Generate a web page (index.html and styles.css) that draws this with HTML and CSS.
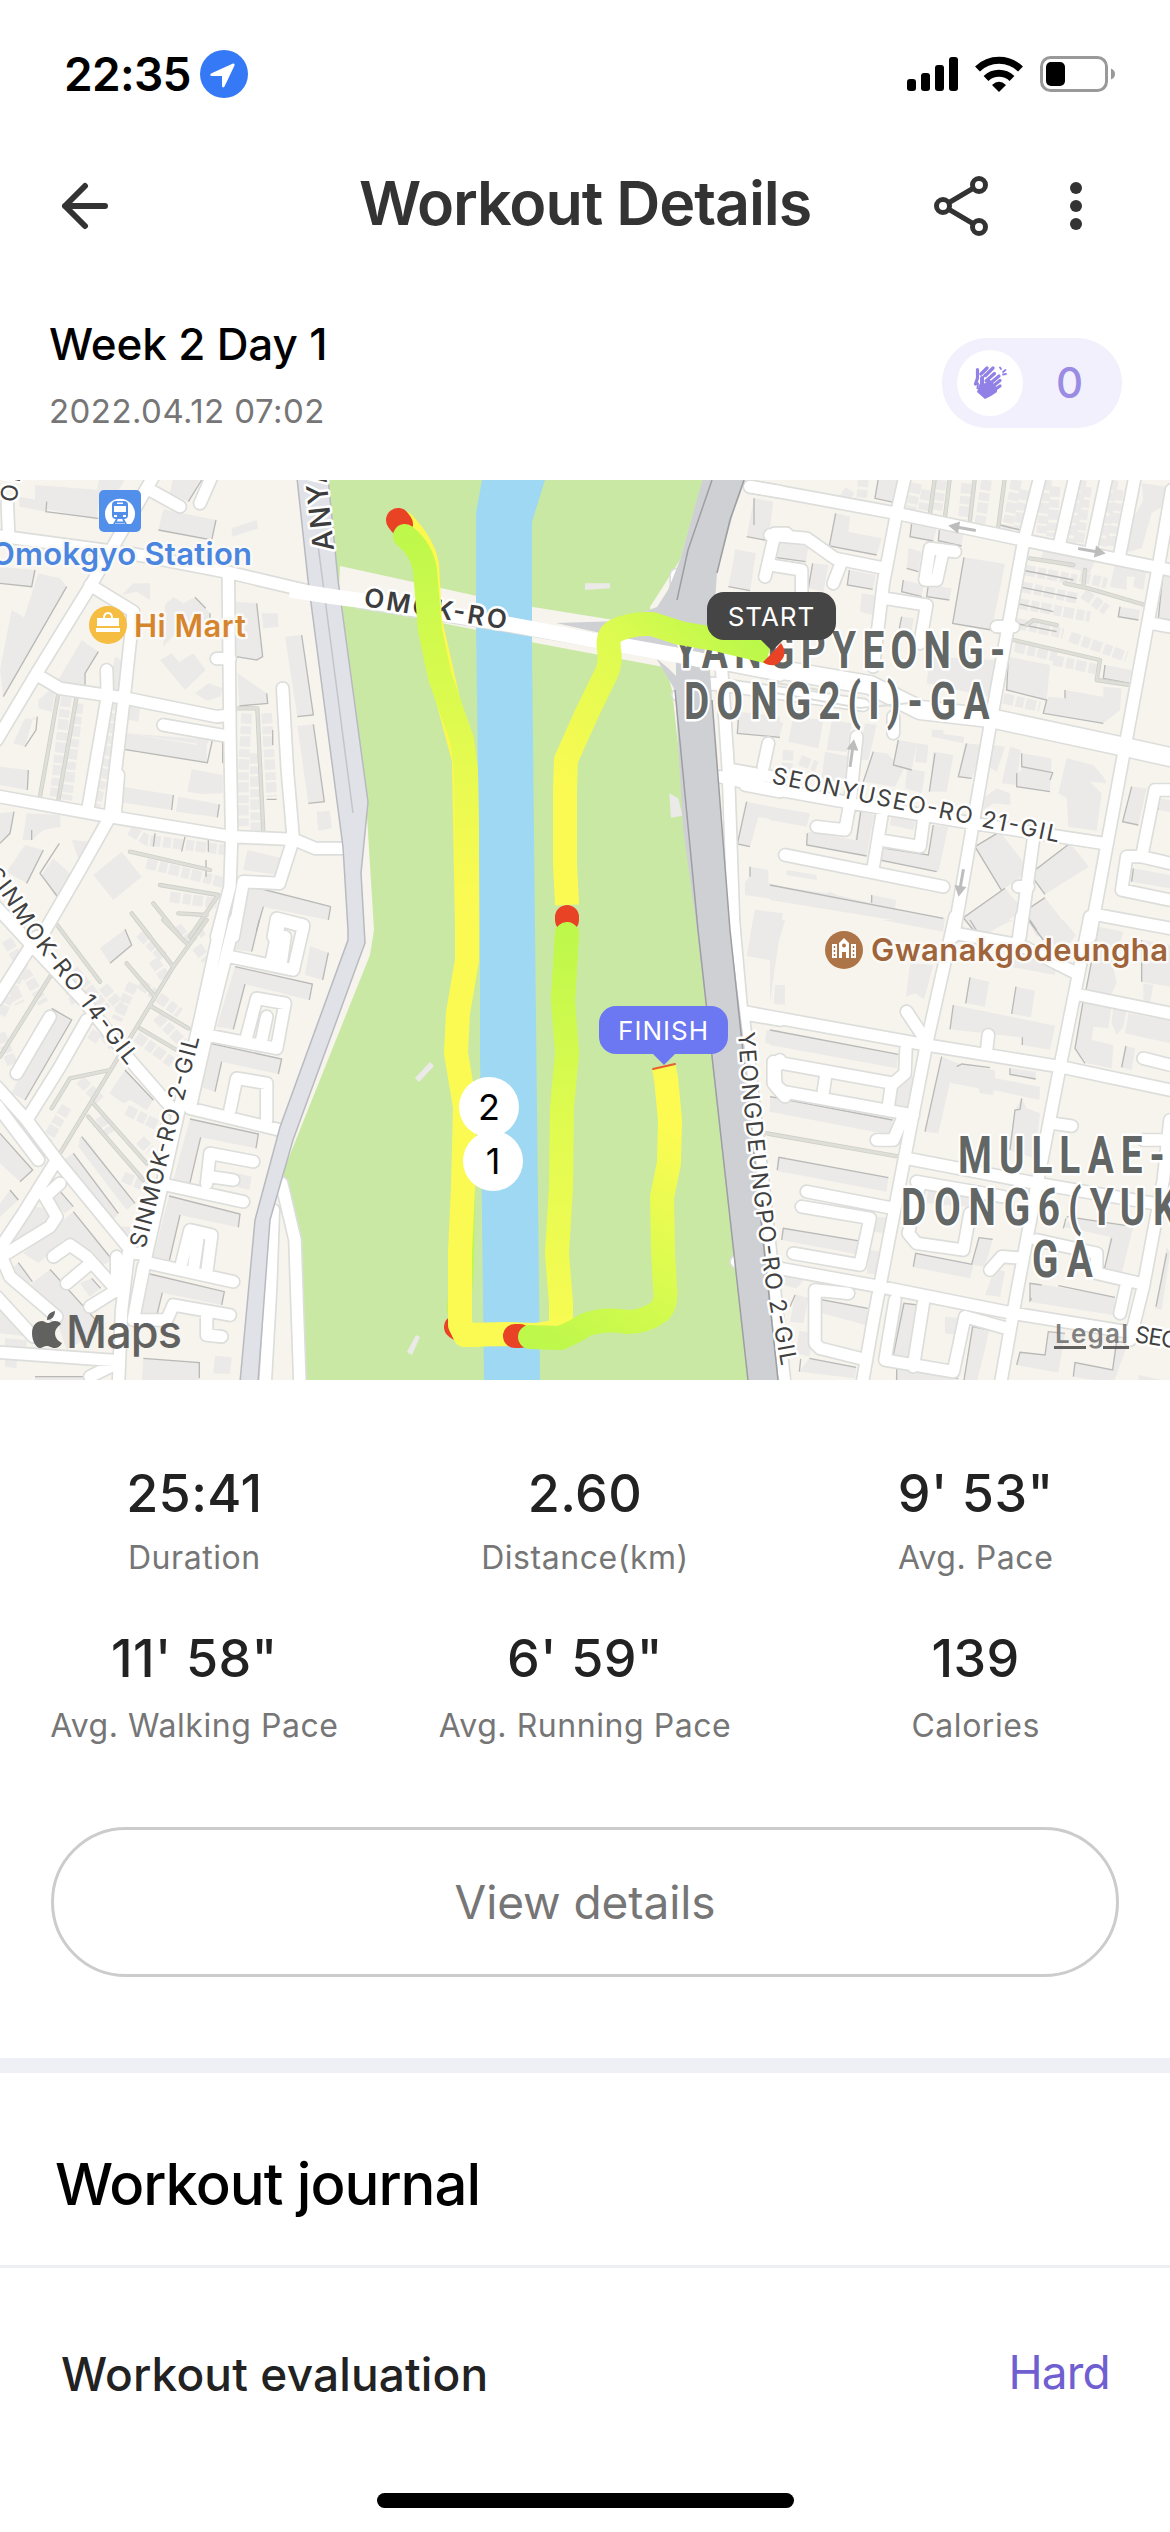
FILE: index.html
```html
<!DOCTYPE html>
<html lang="en">
<head>
<meta charset="utf-8">
<title>Workout Details</title>
<link rel="stylesheet" href="styles.css">
</head>
<body>
<div class="status-bar">
  <div class="status-left">
    <span class="clock">22:35</span>
    <svg class="location" viewBox="0 0 48 48"><circle cx="24" cy="24" r="24" fill="#3579f6"/><path d="M11 23.5 33 13.5Q35 13 34.500 15.500L24.500 36.500Q22.500 38.500 22 36V26H12Q9 25.500 11 23.500Z" fill="#fff"/></svg>
  </div>
  <div class="status-right">
    <svg class="signal" viewBox="0 0 51 34"><rect y="22" width="9" height="12" rx="3"/><rect x="14" y="16" width="9" height="18" rx="3"/><rect x="28" y="8" width="9" height="26" rx="3"/><rect x="42" width="9" height="34" rx="3"/></svg>
    <svg class="wifi" viewBox="0 0 48 36"><g fill="none" stroke="#000" stroke-width="7"><path d="M2.500 13A31 31 0 0 1 45.500 13"/><path d="M11 22.500A19 19 0 0 1 37 22.500"/></g><path d="M17 29Q24 22.500 31 29L24 36Z"/></svg>
    <svg class="battery" viewBox="0 0 75 36"><rect x="1.500" y="1.500" width="65" height="33" rx="9" fill="none" stroke="#999" stroke-width="3"/><rect x="6" y="6" width="19" height="24" rx="5"/><path d="M71 12.500Q75 14 75 18T71 23.500Z" fill="#999"/></svg>
  </div>
</div>

<header class="header">
  <svg class="back" viewBox="0 0 48 48"><path d="M24 4 4 24 24 44M4 24H44" fill="none" stroke="#333" stroke-width="6" stroke-linecap="round" stroke-linejoin="round"/></svg>
  <h1 class="title">Workout Details</h1>
  <div class="actions">
    <svg class="share" viewBox="0 0 54 60"><g fill="none" stroke="#333" stroke-width="5"><path d="M16 26 38 13M16 34 38 47"/><circle cx="9" cy="30" r="6.500"/><circle cx="45" cy="9" r="6.500"/><circle cx="45" cy="51" r="6.500"/></g></svg>
    <svg class="more" viewBox="0 0 12 48"><g fill="#333"><circle cx="6" cy="6" r="6"/><circle cx="6" cy="24" r="6"/><circle cx="6" cy="42" r="6"/></g></svg>
  </div>
</header>

<section class="summary">
  <div class="summary-text">
    <div class="plan">Week 2 Day 1</div>
    <div class="date">2022.04.12 07:02</div>
  </div>
  <div class="claps">
    <span class="clap-disc">
      <svg class="clap-icon" viewBox="0 0 34 34"><g fill="none" stroke="#9181e6" stroke-linecap="round" stroke-linejoin="round"><g stroke-width="3.200"><path d="M4.500 3.500V12L2.500 18M8 8 14 2M12.500 9.500 20 2"/><path d="M9 13 12 8.500" stroke-width="2"/><path d="M13 15 21.500 7.500M16.500 18 26 10M19 21 27 14.500M20 25 27 20"/></g><path d="M9 12V20" stroke-width="4"/><path d="M27 1.500 28 3M32.500 4 30 6M30 8.500 33 8" stroke-width="1.800"/></g><path d="M6.500 18 13 17 16 13 21 18 24 22 24 26 18 30 12 33 4 26Z" fill="#9181e6"/><path d="M5 16.500 4.500 23" stroke="#9181e6" stroke-width="2"/></svg>
    </span>
    <span class="clap-count">0</span>
  </div>
</section>

<section class="map">
<svg class="map-canvas" viewBox="0 480 1170 900">
  <defs>
    <g id="streets">
      <g transform="translate(0 470) scale(.33333)">
        <path d="M0 198 400 252 690 308 960 372M460 20 270 350 110 610 -10 810M450 60 540 110M635 20 600 100M22 100 26 200M270 345 400 425 375 660 330 1040 240 1200 130 1390M120 620 180 655 380 685 650 740 690 735M685 320 690 800 695 1100 690 1250 650 1400M650 566H690M490 765 690 800M320 600 322 680 265 1010M0 980 330 1040 695 1100 880 1108 945 1135H1060M848 655 862 900 880 1108 838 1240 730 1235 700 1400M355 915 345 1040M820 1400 830 1345 910 1365"/>
      </g>
      <g transform="translate(380 470) scale(.33333)">
        <path d="M-60 395 380 465 640 510 890 555 1200 615M890 315V440M895 675 1000 640M1110 50 1200 65M1155 320 1185 190H1220M1025 600 1045 900 1062 1400M1060 900 1200 925M1095 945 1200 965M1165 820 1150 890"/>
      </g>
      <g transform="translate(770 470) scale(.33333)">
        <path d="M-60 50 0 60 380 130 760 210 1200 300M405 20 380 130 340 340 310 590M810 20 760 220 665 740 550 1400M915 20 870 215M1010 20 965 230M1095 20 1050 250M1205 60 1165 290 1065 830 960 1400M0 195 110 205 195 265 345 295M215 275 190 340M0 285 95 300V370M345 385 470 405 450 520M680 470H730M1145 460 1200 470M555 245 480 235 465 330 500 330 520 240M-180 640 280 705M370 740V790M-150 920 0 955 250 1000 610 1060 1000 1120M260 800 240 1000 225 1080 140 1070M45 1155 520 1250M340 1010 310 1190M330 1110 450 1130 460 1055M790 1110 750 1400M745 1250H775M1200 960H1155L1115 1160 1200 1180M1115 1160H1070L1055 1260 1200 1290M985 1335 1200 1375"/>
      </g>
      <g transform="translate(0 920) scale(.33333)">
        <path d="M110 50 -10 240M665 0 600 300 530 600 440 1000 400 1200M705 0 630 300 570 565M-10 500 80 600 170 720 400 1000M-10 555 115 720M170 720 70 880 -10 1000M80 600 180 440 260 300M-30 -60 90 70 250 240 390 420 520 570M50 460 85 400 150 290M425 1000 385 1000 365 1170 355 1400M0 1297 350 1322M270 1370 350 1330M0 1000 30 1070 170 1190M-10 1130 100 1250M160 1010 210 975 260 1010 350 1110M200 1090 260 1040M180 790 135 830 170 890 150 920 20 1000M350 1010V1110L270 1160M690 110 880 150 910 20 840 0 815 120M855 50 845 120M620 345 830 385 855 250 770 235 740 350M800 290 785 360M570 565 840 630M690 570 710 475 800 490V600M500 795 730 845M620 790 630 700 760 725M630 770 700 780M450 1030 700 1085M545 1030 570 930 635 945 620 1060M593 960 580 1050M400 1200 430 1040M400 1200H500L520 1155 690 1185M620 1190V1245L665 1250M845 790 885 960 900 1400M820 870 812 1100 795 1400"/>
      </g>
      <g transform="translate(380 920) scale(.33333)">
        <path d="M1060 0 1085 280 1200 300M1090 290 1150 800 1215 1400M1200 420 1185 450 1188 500 1215 530"/>
      </g>
      <g transform="translate(770 920) scale(.33333)">
        <path d="M-80 275 0 290 470 375 870 440 1200 510M555 -10 470 370 310 1200 275 1400M960 -10 870 440 800 800 740 1120 690 1400M555 40 750 75 920 160M755 -10 745 60M410 275 460 350M655 345 650 390M930 225 1200 280M1120 415 1200 435M408 385 405 460 370 490 10 425V490L40 515 430 585M168 460 160 515M365 490 355 560M400 590 370 660H320M410 715 800 790 1150 850M110 815 370 865M95 860 300 895 270 1035 70 1000M1200 600 1180 780 1120 1100 1080 1260M1120 660H1200M850 610 905 618M-100 1025 0 1040 330 1100 730 1180 1100 1240 1200 1260M235 1120 135 1110V1270L150 1285 290 1320M375 1140 345 1320 550 1355 585 1190 710 1225M460 1150 430 1340M450 790 415 940 440 970 580 990 600 880M440 785 700 830M660 1050 695 1010 760 1015M800 960 980 1000V1060L1110 1090M1050 1180 1070 1090"/>
      </g>
    </g>
    <g id="alleys">
      <path transform="translate(0 470) scale(.33333)" d="M175 670 120 980M230 680 175 990M710 715H772L790 1085M390 1145 630 1200M480 1245 655 1275 570 1400M395 1330 450 1400M460 1300 540 1400M535 1330 620 1335"/>
      <path transform="translate(770 470) scale(.33333)" d="M495 20 480 130M540 20 525 140M615 20 600 150M705 20 685 170M780 265 910 285M885 340 955 355 1125 405M945 300 940 350M730 510 990 570 980 630 1080 645M770 465 790 450 860 465"/>
      <path transform="translate(0 920) scale(.33333)" d="M160 0 300 185M410 0 520 140M620 0 520 140 180 700M380 130 465 230M490 0 565 75M455 260 565 325M420 325 530 390M150 170 0 410M155 565 210 475 330 450M265 590 430 780M280 550 440 730"/>
      <path transform="translate(770 920) scale(.33333)" d="M-60 630 0 642 400 712"/>
    </g>
    <linearGradient id="left-run" gradientUnits="userSpaceOnUse" x1="0" y1="530" x2="0" y2="900"><stop stop-color="#bdf84a"/><stop offset=".25" stop-color="#cffa4d"/><stop offset="1" stop-color="#fbfa52"/></linearGradient>
    <linearGradient id="start-run" gradientUnits="userSpaceOnUse" x1="770" y1="650" x2="590" y2="820"><stop stop-color="#b9f849"/><stop offset=".4" stop-color="#dcfb50"/><stop offset="1" stop-color="#fbfa52"/></linearGradient>
    <linearGradient id="mid-run" gradientUnits="userSpaceOnUse" x1="0" y1="930" x2="0" y2="1320"><stop stop-color="#bdf84a"/><stop offset=".5" stop-color="#e0fb50"/><stop offset="1" stop-color="#f7fb52"/></linearGradient>
    <linearGradient id="finish-run" gradientUnits="userSpaceOnUse" x1="540" y1="1340" x2="680" y2="1130"><stop stop-color="#bdf84a"/><stop offset=".5" stop-color="#dcfb50"/><stop offset="1" stop-color="#fdfb52"/></linearGradient>
    <path id="gil14" d="M-8 870 10 893 34 931 74 982 129 1055 148 1079"/>
    <path id="gil-ydp" d="M746 1032 750 1085 759 1173 772 1273 792 1380"/>
  </defs>

  <rect class="land" y="480" width="1170" height="900"/>
  <path class="park" d="M322 480 366 800 374 930 370 955 283 1172 300 1240 304 1380H752L705 930 690 850 672 690 650 607 680 560 703 480Z"/>
  <path class="land" d="M340 566 477 596 533 607 620 621 657 607 690 590 690 672 520 640 477 630 345 604 338 610Z"/>
  <path class="water" d="M482 480 476 513 476 620 480 930 480 1053 484 1380H540L535 930 532 643 532 522 545 480Z"/>

  <g class="buildings">
    <g transform="translate(0 470) scale(.33333)">
      <path d="M105 45 300 60 290 150 105 110ZM58 80 140 95V125L58 110ZM300 20H380L350 70 290 60ZM520 20H605L565 95 510 70ZM490 118 648 150 635 210 475 180ZM695 175 770 150 775 175 697 200ZM0 290 105 300 95 350 0 340ZM115 310 180 325 200 350 10 680 0 600 60 480ZM35 420 120 470 30 610 0 600ZM245 510 295 545 255 610 250 650 175 630ZM345 560 370 575 360 660 325 655ZM365 375 400 340 450 340V390L410 365ZM495 405 520 380 550 400 585 382 630 430V470L545 470 490 530ZM480 570 515 550 537 577 580 550 617 600 555 660ZM585 670 625 640 668 655 660 680 620 692ZM708 395 770 400 788 560 770 570 708 560ZM785 430H833L836 470 790 475ZM713 610 800 670 803 700 718 708ZM855 500 905 495 940 735 892 740ZM892 768 940 763 973 995 925 1000ZM950 1025 990 1022 995 1075 955 1082ZM375 700 420 710 415 755 365 745ZM380 790 620 825 645 775 590 770 590 825 380 790 372 838 620 875 668 880V815L645 775 640 810 380 790ZM575 898 668 915V970L610 972 562 965ZM355 948 520 975 515 1020 350 995ZM535 980 658 1003 652 1042 528 1025ZM110 750 100 740 75 830 40 820 75 745ZM0 890 85 900 82 960 0 945ZM80 1030 180 1035 182 1070 130 1080 95 1110H68ZM0 1030 42 1025 30 1090 0 1120ZM75 1125 130 1140 80 1240 20 1205ZM160 1165 220 1220 180 1300 125 1215ZM280 1215 365 1145 425 1220 340 1290ZM742 1140 848 1165 832 1215 730 1200ZM750 1248 992 1310 985 1350 790 1310 770 1390H720ZM115 690 150 660 165 670 155 725 115 715ZM215 1110 270 1115 240 1180ZM620 790 668 790V880L620 875Z"/>
      <path class="houses" d="M200 680 195 710 165 980M235 700 200 990M340 690 325 850 285 1010M740 730 730 900V1070M765 850 768 1080M800 730 815 980M390 1080 440 1110 680 1140M440 1180 680 1240M510 1280 650 1300"/>
    </g>
    <g transform="translate(380 470) scale(.33333)">
      <path d="M615 340H690V355L615 360ZM868 970 895 985 907 1037 873 1043ZM1122 85 1180 95 1165 212 1100 200ZM1065 238 1128 250 1110 362 1045 350 1060 275ZM1075 725 1200 740V800L1072 790ZM1100 995 1200 1015V1050L1135 1042 1110 1130 1072 1122ZM1110 1190 1165 1200V1240L1200 1250V1290L1095 1275V1235L1110 1220ZM1125 1318 1200 1330V1400H1110Z"/>
    </g>
    <g transform="translate(770 470) scale(.33333)">
      <path d="M325 25H395L370 97 315 85ZM197 130 240 140 235 185 335 205 320 255 178 228ZM25 215 115 230 107 275 15 262ZM128 280 175 285 160 365 115 355ZM238 300 318 315 308 358 232 345ZM275 370 325 378 310 435 270 425ZM425 160 500 175 490 213 420 200ZM508 180 580 190 575 228 505 212ZM415 235 455 245 445 305 410 295ZM400 330 460 345 455 380 395 365ZM475 345 545 355 538 390 470 380ZM582 262 705 282 665 480 548 460ZM395 440 432 445 425 480 388 478ZM480 560 680 570 655 680 470 640ZM70 740 160 750 145 835 55 815ZM185 750 245 760 230 845 170 840ZM165 845 240 860 225 940 155 925ZM285 760 320 765 295 870 265 870ZM310 845 350 850 400 900 375 950 280 935ZM385 810 440 820 425 900 370 885ZM440 820 475 825 470 880 435 875ZM490 845 550 855 530 965 478 965ZM585 820 640 825 605 925 565 920ZM412 895 465 905 455 970 405 955ZM485 780 520 780 520 792 583 800 580 820 485 800ZM0 1010 120 1030 110 1070 0 1050ZM270 1025 312 1035 290 1158 110 1125 115 1085 255 1110ZM365 1030 440 1045 430 1080 360 1065ZM490 1065 535 1070 505 1205 328 1170 330 1130 475 1155ZM50 1200 140 1215V1230L50 1215ZM0 1245 170 1270 180 1265 200 1275 300 1298 305 1275 378 1290 375 1320 525 1345 520 1375 0 1290ZM0 1325 38 1330 30 1400H0ZM715 560 840 585 830 690 710 660ZM885 660 1000 680 1000 650 1055 655 1050 720 1000 760 820 730 835 680 885 685ZM670 825 705 830 680 905 655 890ZM755 850 845 865 840 965 740 950V910L755 900ZM720 830 752 840 740 945 695 940ZM890 865 970 885 1000 920 1010 940 960 935 995 970 980 1082 895 1070 890 985 865 970ZM645 980 680 955 720 970 722 1005 670 1000 640 1020ZM615 1130 690 1085 778 1200 695 1262ZM780 1212 900 1120 957 1190 825 1273ZM580 1343 705 1255 760 1320 640 1400ZM762 1325 825 1283 900 1380 800 1400ZM1085 950 1130 955 1105 1065 1058 1055ZM1165 985 1200 990V1025L1165 1020ZM1090 1195 1200 1215V1255L1085 1235ZM1115 40 1190 50 1175 110 1145 130 1115 235 1060 250 1070 180 1120 90ZM1035 280 1130 295 1120 360 1090 350 1095 320 1070 320V360L1020 350ZM1050 410 1110 420 1105 450 1045 440ZM1180 300H1200V450L1165 445ZM0 740 40 760 25 805 0 800ZM1005 585 1085 600 1075 640 1000 625ZM825 235 980 255 960 310 810 270Z"/>
      <path class="houses" d="M440 40 420 130M470 60 460 120M515 30 500 120M650 30 630 160M590 40 580 150M740 30 710 180M765 60 745 180M830 30 815 190M855 50 845 200M935 30 900 220M950 50 925 220M1030 30 995 230M1045 60 1020 230M240 60 220 90M280 20 275 90M765 300 920 330M755 350 920 385M745 400 960 440M740 460 880 490M735 530 860 560M900 500 1070 560M850 570 990 600M940 370 1010 420M700 685 810 710M55 840 50 910M90 870 140 890M930 320 1010 340"/>
    </g>
    <g transform="translate(0 920) scale(.33333)">
      <path d="M712 0H780L755 95 705 90ZM930 78 985 98 968 180 915 165ZM705 140 937 192 928 240 735 192 700 328 650 320ZM630 368 845 415 835 462 665 425 645 515 600 500ZM570 597 775 642 768 685 602 652 570 788 520 780ZM507 828 720 882 715 922 540 885 508 1022 460 1010ZM450 1062 673 1115 665 1155 487 1118 467 1200 415 1190ZM645 1307 695 1312 690 1362 640 1360ZM430 1315 598 1328 595 1390H425ZM300 85 375 28 395 75 330 130ZM155 265 215 300 75 540 35 520ZM328 520 375 450 460 540 440 570 390 540 370 550ZM0 640 98 750 60 785 0 730ZM0 850 30 810 55 840 0 890ZM35 940 100 860 150 865 160 890 60 975ZM175 808 220 860 195 880 140 830ZM220 875 337 1020 280 1050 190 960 115 1030 70 1000ZM55 1028 95 1085 65 1115 20 1060ZM150 1048 310 1225 200 1290 170 1200 70 1110ZM275 1075 302 1105 270 1130 240 1090ZM0 1170 30 1165 90 1250 0 1240ZM15 1255 80 1260V1290L15 1285ZM190 720 220 700 355 880 330 910 200 760ZM240 650 260 660 405 850 380 870 235 680ZM715 760 755 770 748 810 710 800ZM15 1320H50V1345L15 1340ZM105 1370H255V1390H105ZM360 920 390 920V980Z"/>
      <path class="houses" d="M20 60 130 250M70 130 0 290M170 130 230 250M220 150 320 270M310 200 360 260M420 40 490 110M530 20 560 60M420 190 540 280M460 120 500 180M590 80 620 120M470 290 550 370M410 350 520 430M240 480 300 540M200 560 140 660M380 570 480 620M310 340 340 380M400 190 350 300M560 60 610 30M100 10 60 0M370 770 440 800M300 590 330 640M420 660 450 690M0 340 40 440M40 210 60 250M270 340 300 360"/>
    </g>
    <path d="M415 1078 430 1062 434 1066 419 1082ZM407 1352 416 1335 420 1337 412 1355Z"/>
    <g transform="translate(380 920) scale(.33333)"><path d="M1120 0H1215L1180 122 1100 108ZM1190 195H1215V255L1183 250ZM1160 330H1200V375L1155 370ZM1175 530H1210V580L1168 575ZM1195 710H1215V760L1188 750Z"/></g>
    <g transform="translate(770 920) scale(.33333)">
      <path d="M0 0H35L0 250ZM15 195 38 198 28 255 12 250ZM335 0H520V35ZM420 130 490 135 462 238 435 220 408 230ZM600 172 657 185 645 260 587 250ZM738 200 795 212 783 292 725 282ZM550 255 855 317 840 390 757 375 755 352 540 328ZM0 330 385 403 380 445 0 375ZM0 530 368 600 362 645 0 575ZM22 712 355 773 350 815 20 752ZM38 925 280 965 272 1005 35 960ZM515 410 575 435 675 450V475L810 500 808 540 670 510V525L630 520 625 505 540 488 505 640 465 635ZM725 445 797 455V480L720 465ZM755 535 770 565 810 580 795 715 715 690 735 570ZM435 470 425 560 375 555 380 500 410 465ZM985 20 1060 35 1030 140 1040 190 1020 230 948 210ZM1115 60 1200 75V200L1115 185ZM1120 190 1150 195 1140 250 1120 245ZM940 240 1025 260 1015 325 970 320 965 360 1030 375 1025 445 950 430 915 385ZM1030 260 1070 270 1060 320 1040 345 1025 310ZM1075 280 1200 300V370L1065 340ZM1065 378 1095 385 1085 450 1052 442ZM435 1000 605 1030 625 950 668 958 645 1040 610 1035 600 1075 430 1042ZM475 795 650 810 640 865 470 850ZM320 890 358 895 345 940 310 935ZM300 990 335 995 328 1065 290 1060ZM675 1045 705 1055 690 1130 645 1125ZM785 1088 1035 1130 1030 1185 778 1145ZM910 890 1090 920 1050 1080 1000 1070 1020 950 880 920ZM1200 1000 1175 1170 1155 1165 1190 980ZM145 1135 293 1163 287 1215 140 1175ZM118 1315 260 1340 255 1375 88 1355ZM88 1232 130 1240 118 1310 78 1300ZM75 1122 115 1135 100 1210 60 1205ZM30 1060 105 1075 80 1105 40 1095ZM395 1150 450 1160 412 1320 365 1310ZM525 1190 570 1195 560 1245 525 1240ZM605 1220 657 1235 620 1390H580ZM838 1235 885 1240 865 1358 740 1335 750 1295 825 1305ZM1035 1270 1070 1280 1030 1390 910 1370 915 1328 1025 1350ZM380 1343 565 1375V1390H375ZM1105 1365 1200 1385V1400H1105ZM730 100 860 130 855 165 720 140ZM585 0H730L620 50ZM775 0H880L918 45 885 90 820 60Z"/>
    </g>
  </g>

  <g class="edges">
    <path transform="translate(0 470) scale(.33333)" d="M200 350 10 680M565 95 605 30M140 95 138 125 295 145M648 150 635 210 475 180M105 300 95 350 0 340M295 545 255 610V650M370 575 360 650M630 430V455M585 382 617 415M770 400 788 560 770 570 708 560M800 670 803 700 718 708M905 495 940 735 892 740M940 763 973 995 925 1000M645 775 622 878 372 838M520 975 515 1020M658 1003 652 1042M112 740 108 780 75 830M85 900 82 960M42 1025 30 1090 0 1120M130 1140 80 1240M178 1120 120 1210 180 1290M95 1080V1110M992 1310 985 1350M790 1310 770 1380M750 1248 992 1310M668 815V880M818 780V825M800 988H830M465 1090 460 1130M555 1100 545 1145M625 1110V1145M618 1170V1220M220 1220 170 1300M848 1165 832 1215"/>
    <path transform="translate(770 470) scale(.33333)" d="M325 25 315 85 370 97M197 130 178 228 320 255M15 262 107 275M128 280 115 355M238 300 232 345 308 358M425 160 420 200 490 213M508 180 505 212 575 228M582 262 548 460 665 480M400 330 395 365 455 380M410 295 445 305M475 345 470 380 538 390M395 440 388 475M715 560 710 660 830 690 820 730 1000 760M885 660V685M755 850V890L848 908 840 930M740 910V950L840 965M590 820 565 920 605 925M495 850 478 965M310 845 280 935M385 810 370 885 425 900M615 1130 695 1262M690 1085 615 1130M900 1120 780 1212 825 1273M705 1255 580 1343 610 1380M825 1283 762 1325 800 1380M272 1025 260 1110M112 1090 110 1125 290 1158M490 1065 475 1155 332 1133 328 1170 500 1205M1085 950 1058 1055 1105 1065M1090 1195 1085 1235M1165 985V1020M0 1245 520 1345M305 1275V1298M1050 410 1045 440 1105 450M1180 300 1165 445 1200 450M1005 585 1000 625 1080 640M745 350 920 385M755 300 910 330M740 400 850 425M735 460 860 485M690 165 750 180"/>
    <path transform="translate(0 920) scale(.33333)" d="M778 0 755 95M985 98 968 180M705 140 937 192 928 240M735 192 700 328M630 370 845 417 835 462M665 425 645 515M570 597 775 642 768 685M602 652 570 788M507 828 720 882 715 922M540 885 508 1022M450 1062 673 1115 665 1155M487 1118 467 1200M430 1315 598 1328V1375M0 640 98 750 60 785M30 810 55 840M175 808 220 860M220 875 337 1020M55 1028 97 1085M150 1048 310 1225M275 1075 302 1105M375 450 460 540M220 700 355 880M245 650 405 850M155 265 215 300 75 540M375 28 395 75 330 130M30 1165 90 1250M105 1370H255"/>
    <path transform="translate(380 470) scale(.33333)" d="M1122 85V165M1100 200 1165 212M1045 350 1110 362M1075 750 1072 790 1200 802M1100 995 1072 1122 1110 1130M1110 1190V1220"/>
    <path transform="translate(770 920) scale(.33333)" d="M600 172 587 250M738 200 725 282M550 255 540 328M757 352V375M0 330 385 403M0 530 368 600M22 750 27 712 355 773M35 960 40 925 280 965M515 410 465 635M560 440 575 432 660 443M720 445V463L797 477M755 535 750 568 735 570 720 690M985 20 948 210M1115 60V185M940 240 915 385 945 430M1068 378 1055 442M430 1040 437 1000 605 1033 627 953 668 958M785 1135 780 1142V1090L815 1095M865 1097 1035 1132M1025 955 1000 1060M1190 1000 1158 1160M145 1175V1137L293 1165M118 1315 258 1342M88 1355 92 1317M443 1155 402 1150 368 1315M657 1230 608 1220 582 1380M885 1240 835 1235 825 1305 750 1297 740 1335M1075 1268 1040 1265 1028 1350 915 1328 910 1370M380 1380V1343L565 1375M890 890 1070 917M880 925 888 895M75 1125 60 1160M600 0 625 40M775 0 820 60"/>
  </g>

  <use href="#alleys" class="alley-edge"/>
  <use href="#alleys" class="alley"/>
  <use href="#streets" class="street-edge"/>
  <path class="street-edge wide" d="M690 652 770 668 870 685 920 710 990 718 1125 747 1170 757"/>
  <use href="#streets" class="street"/>
  <path class="street wide" d="M690 652 770 668 870 685 920 710 990 718 1125 747 1170 757"/>
  <path class="lane-edge" d="M770 692 860 708 920 702M770 682 820 690"/>

  <path class="highway" d="M556 623 620 621 657 607 668 590 680 560 703 478H746L733 514 717 573 710 672 730 930 745 1050 779 1382H748L697 930 683 828 675 690 656 658 668 668 676 676 676 650Z"/>
  <path class="highway-line" d="M712 480 688 550 677 600M675 690 698 930 748 1380M712 700 730 930 778 1380M744 480 730 520 717 573"/>
  <path class="expressway" d="M297 478 308 580 343 847 348 930V940L280 1127 255 1220 240 1382H258L270 1220 293 1140 365 943 361 873 368 802 338 580 328 478Z"/>
  <path class="expressway-line" d="M318 545 353 813"/>
  <path class="street omok" d="M290 590 335 597 380 603 507 624 593 640 676 655 720 664"/>

  <g class="arrows">
    <path transform="translate(962 528) rotate(10)" d="M-14 0 -3-6V-1.500H14V1.500H-3V6Z"/>
    <path transform="translate(1092 551) rotate(190)" d="M-14 0 -3-6V-1.500H14V1.500H-3V6Z"/>
    <path transform="translate(852 753) rotate(98)" d="M-14 0 -3-6V-1.500H14V1.500H-3V6Z"/>
    <path transform="translate(961 883) rotate(-80)" d="M-14 0 -3-6V-1.500H14V1.500H-3V6Z"/>
  </g>

  <g class="road-names">
    <text transform="translate(363 606) rotate(9.300)" class="major" textLength="144">OMOK-RO</text>
    <text transform="translate(334 550) rotate(-96)" class="major tall" textLength="136">ANYANG</text>
    <text transform="translate(16 503) rotate(-80)" textLength="40">OI-</text>
    <text transform="translate(771 783) rotate(11.700)" textLength="293">SEONYUSEO-RO 21-GIL</text>
    <text transform="translate(145 1249) rotate(-75.500)" textLength="218">SINMOK-RO 2-GIL</text>
    <text transform="translate(1134 1342) rotate(9)" textLength="60">SEON</text>
    <text dy="8" textLength="238"><textPath href="#gil14">SINMOK-RO 14-GIL</textPath></text>
    <text dy="8" textLength="336"><textPath href="#gil-ydp">YEONGDEUNGPO-RO 2-GIL</textPath></text>
  </g>

  <g class="districts">
    <text transform="translate(674 668) scale(.76 1)" textLength="436">YANGPYEONG-</text>
    <text transform="translate(684 719) scale(.76 1)" textLength="402">DONG2(I)-GA</text>
    <text transform="translate(958 1173) scale(.76 1)" textLength="272">MULLAE-</text>
    <text transform="translate(901 1225) scale(.76 1)" textLength="364">DONG6(YUK</text>
    <text transform="translate(1032 1277) scale(.76 1)" textLength="80">GA</text>
  </g>

  <g class="places">
    <rect x="99" y="490" width="42" height="42" rx="5" fill="#528fea"/>
    <path d="M109 524A15 15 0 1 1 131 524Z" fill="#fff"/>
    <rect x="112" y="501" width="16" height="18" rx="4" fill="#528fea"/>
    <path d="M117 519 113 526M123 519 127 526M116 522.500H124" stroke="#528fea" stroke-width="1.800" fill="none"/>
    <rect x="117" y="502.500" width="6" height="1.500" fill="#fff"/><rect x="114" y="506" width="12" height="6" fill="#fff"/><rect x="114" y="515" width="3" height="2" fill="#fff"/><rect x="123" y="515" width="3" height="2" fill="#fff"/>
    <text x="-9" y="565" textLength="261" fill="#4a86df">Omokgyo Station</text>
    <circle cx="108" cy="625" r="19" fill="#f5bd42"/>
    <path d="M97 618H119V626H97ZM96 628H120V632H96Z" fill="#fff"/><path d="M104 618Q104 613 108 613T112 618" fill="none" stroke="#fff" stroke-width="2"/>
    <text x="134" y="637" textLength="112" fill="#d6852f">Hi Mart</text>
    <circle cx="844" cy="950" r="19" fill="#ad7547"/>
    <path d="M832 944H837V958H832ZM851 944H856V958H851ZM839 943 844 938 849 943V958H846V952H842V958H839Z" fill="#fff"/><circle cx="844" cy="945.500" r="2" fill="#ad7547"/><path d="M834.500 946V957M853.500 946V957" stroke="#ad7547" stroke-width="1.500" stroke-dasharray="2 2"/>
    <text x="871" y="961" textLength="297" fill="#a0643a">Gwanakgodeungha</text>
  </g>

  <g class="routes">
    <path stroke="#fdf84e" d="M403 523Q424 545 427 565L430 620 448 700 464 760 467 930"/>
    <path stroke="#e94326" d="M398 520 401 524M456 1327 459 1329"/>
    <path stroke="#bdf84a" d="M463 1190 462 1265 459 1310"/>
    <path stroke="url(#left-run)" d="M405 536Q422 550 425 570L427 595 430 630 440 677 462 740 466 770 467 825 467 930 467 960 458 1013 456 1053 465 1107 463 1187 460 1253 460 1325 465 1335 475 1335"/>
    <path stroke="#fbfa52" stroke-linecap="butt" d="M460 1323 465 1335 505 1334 535 1335 561 1331"/>
    <path stroke="url(#mid-run)" d="M567 933 563 1000 567 1053 562 1107 561 1187 557 1253 561 1303 561 1328"/>
    <path stroke="#e94326" d="M567 917V920M515 1336H520"/>
    <path stroke="url(#mid-run)" d="M567 934 563 1000"/>
    <path stroke="url(#start-run)" stroke-linecap="butt" d="M769 652 745 646 720 640 680 633 652 624Q630 623 615 631 607 635 609 650 612 665 603 680L587 713 566 760 565 790 565 863 567 905"/>
    <path class="start-mark" d="M763 662 773 652 781 643Q786 650 784 656 781 663 775 665 768 666 763 662Z"/>
    <path stroke="url(#finish-run)" d="M530 1337 560 1338Q575 1332 585 1325 605 1318 627 1322 645 1322 660 1311 667 1303 665 1287L663 1253 662 1197 669 1163 670 1120 666 1078"/>
    <path stroke="#fbfa52" stroke-linecap="butt" d="M666 1080 664 1067"/><path class="finish-mark" d="M653 1069 675 1064"/>
  </g>

  <g class="attribution">
    <path d="M61 1324C57 1327 55 1330 55 1333 55 1338 58 1341 62 1343 60 1347 57 1348 55 1348 51 1348 50 1346 47 1346S42 1348 40 1348C36 1348 32 1341 32 1333 32 1325 37 1321 42 1321 44 1321 46 1323 48 1323S52 1321 55 1321C58 1321 60 1322 61 1324ZM47 1320C47 1315 50 1312 55 1311 55 1316 52 1320 47 1320Z"/>
    <text x="66" y="1348" class="brand" textLength="116">Maps</text>
    <text x="1055" y="1343" class="legal" textLength="73">Legal</text>
    <path d="M1054 1346H1086V1349H1054ZM1103 1346H1129V1349H1103Z"/>
  </g>
</svg>
  <span class="pin start">START</span>
  <span class="pin finish">FINISH</span>
  <span class="km km-two">2</span>
  <span class="km km-one">1</span>
</section>

<section class="stats">
  <div class="stat"><div class="value">25:41</div><div class="label">Duration</div></div>
  <div class="stat"><div class="value">2.60</div><div class="label">Distance(km)</div></div>
  <div class="stat"><div class="value">9' 53"</div><div class="label">Avg. Pace</div></div>
  <div class="stat"><div class="value">11' 58"</div><div class="label">Avg. Walking Pace</div></div>
  <div class="stat"><div class="value">6' 59"</div><div class="label">Avg. Running Pace</div></div>
  <div class="stat"><div class="value">139</div><div class="label">Calories</div></div>
</section>
<button class="details">View details</button>

<section class="journal">
  <h2 class="journal-title">Workout journal</h2>
  <div class="evaluation"><span class="evaluation-name">Workout evaluation</span><span class="evaluation-value">Hard</span></div>
</section>
<div class="home-indicator"></div>
</body>
</html>
```
FILE: styles.css
```css
* { box-sizing: border-box; }
body { margin: 0; width: 1170px; height: 2532px; overflow: hidden; display: flex; flex-direction: column; background: #fff; font-family: Inter, "Liberation Sans", sans-serif; color: #222; }
svg { display: block; flex: none; }

.status-bar { height: 148px; display: flex; justify-content: space-between; align-items: center; padding: 0 55px 0 64px; }
.status-left, .status-right { display: flex; align-items: center; }
.clock { width: 136px; font-size: 46px; font-weight: 600; color: #000; line-height: 56px; letter-spacing: -.7px; }
.location { width: 48px; height: 48px; }
.signal { width: 51px; height: 34px; margin-right: 17px; }
.wifi { width: 48px; height: 36px; margin-right: 17px; }
.battery { width: 75px; height: 36px; }

.header { height: 115px; display: grid; grid-template-columns: 302px 1fr 302px; align-items: center; }
.back { width: 48px; height: 48px; margin-left: 61px; }
.title { margin: 0 0 6px; text-align: center; font-size: 61px; font-weight: 600; line-height: 74px; letter-spacing: -1.1px; color: #333; white-space: nowrap; }
.actions { display: flex; align-items: center; gap: 82px; padding-left: 66px; }
.share { width: 54px; height: 60px; }
.more { width: 12px; height: 48px; }

.summary { height: 217px; display: flex; justify-content: space-between; align-items: center; padding: 23px 48px 0 49px; }
.summary-text { margin-bottom: 10px; }
.plan { font-size: 44px; font-weight: 500; line-height: 66px; letter-spacing: -.15px; color: #000; }
.date { font-size: 33px; line-height: 68px; letter-spacing: .45px; color: #767676; }
.claps { width: 180px; height: 90px; border-radius: 45px; background: #f2f0fc; display: flex; align-items: center; padding-left: 15px; margin-bottom: 1px; }
.clap-disc { width: 66px; height: 66px; border-radius: 50%; background: #fff; display: flex; align-items: center; justify-content: center; }
.clap-icon { width: 34px; height: 34px; }
.clap-count { flex: 1; padding-right: 6px; text-align: center; font-size: 42px; font-weight: 500; color: #9a8be3; }

.map { position: relative; height: 900px; flex: none; overflow: hidden; }
.map-canvas { width: 1170px; height: 900px; }
.land { fill: #f7f4ed; }
.park { fill: #c9e8a4; }
.water { fill: #9fd8f2; }
.buildings { fill: #ebeae8; }
.houses { fill: none; stroke: #ebeae8; stroke-width: 32; stroke-dasharray: 31 8 24 6; }
.edges { fill: none; stroke: #b9b9b8; stroke-width: 4; }
.alley-edge, .alley, .street-edge, .street, .lane-edge { fill: none; stroke-linejoin: round; stroke-linecap: round; }
.alley-edge { stroke: #cfd0c9; stroke-width: 13; }
.alley { stroke: #dfdfd9; stroke-width: 8; }
.street-edge { stroke: #dcdedb; stroke-width: 44; }
.street { stroke: #fff; stroke-width: 34; }
.street-edge.wide { stroke-width: 21; }
.street.wide { stroke-width: 18; }
.street.omok { stroke-width: 15; stroke-linecap: butt; }
.lane-edge { stroke: #dcdedb; stroke-width: 2; }
.highway { fill: #cfd0d4; }
.highway-line { fill: none; stroke: #9d9ea2; stroke-width: 1.5; }
.expressway { fill: #e0e2e7; stroke: #b8bac0; stroke-width: 1.5; }
.expressway-line { fill: none; stroke: #c3c4c9; stroke-width: 1.5; }
.arrows { fill: #bdbdbd; }
.map text { paint-order: stroke; stroke: #fff; stroke-width: 5px; stroke-linejoin: round; font-weight: 500; }
.road-names text { font-size: 23px; font-weight: 400; fill: #414141; }
.road-names .major { font-size: 26px; font-weight: 600; fill: #3d3d3d; }
.road-names .tall { font-size: 29px; font-weight: 500; }
.districts text { font-family: Roboto, "Liberation Sans", sans-serif; font-size: 51px; font-weight: 700; fill: #626665; }
.places text { font-size: 31px; font-weight: 600; stroke: #fbf9f6; }
.routes path { fill: none; stroke-width: 24px; stroke-linecap: round; stroke-linejoin: round; }
.routes path[stroke-linecap="butt"] { stroke-linecap: butt; }
.routes .start-mark { fill: #e94326; stroke: none; }
.routes .finish-mark { stroke: #e96030; stroke-width: 2px; }
.attribution { fill: #555; opacity: .92; }
.attribution .brand { font-size: 45px; stroke: none; }
.attribution .legal { font-size: 26px; font-weight: 600; fill: #777; stroke: none; }
.pin { position: absolute; width: 129px; height: 48px; border-radius: 17px; color: #fff; font-size: 26px; line-height: 49px; letter-spacing: 1px; text-align: center; }
.pin::after { content: ""; position: absolute; left: 53px; top: 47px; border: 12px solid transparent; border-bottom: 0; }
.start { left: 707px; top: 112px; background: #454545; }
.start::after { border-top-color: #454545; }
.finish { left: 599px; top: 526px; background: #6c77f2; }
.finish::after { border-top-color: #6c77f2; }
.km { position: absolute; width: 60px; height: 60px; border-radius: 50%; background: #fff; color: #000; font-size: 36px; line-height: 60px; text-align: center; }
.km-two { left: 459px; top: 597px; }
.km-one { left: 463px; top: 651px; }

.stats { display: grid; grid-template-columns: repeat(3, 1fr); gap: 0 2px; height: 447px; padding-top: 79px; align-content: start; }
.stat { height: 165px; text-align: center; white-space: nowrap; }
.stat:nth-child(n+4) .label { padding-top: 3px; }
.value { font-size: 52px; font-weight: 500; line-height: 70px; letter-spacing: .4px; }
.label { font-size: 32px; line-height: 57px; color: #767676; letter-spacing: .55px; }
.details { width: 1068px; height: 150px; flex: none; margin: 0 51px; border: 3px solid #ccc; border-radius: 75px; background: #fff; color: #767676; font: 400 46px/60px Inter, "Liberation Sans", sans-serif; letter-spacing: -.1px; }

.journal { margin-top: 81px; border-top: 15px solid #eff0f5; }
.journal-title { margin: 0; height: 195px; padding: 74px 55px 0; border-bottom: 3px solid #eeeff4; font-size: 58px; font-weight: 500; line-height: 74px; letter-spacing: -1px; color: #000; }
.evaluation { display: flex; justify-content: space-between; padding: 74px 60px 0 61px; font-size: 46px; line-height: 64px; }
.evaluation-name { font-weight: 500; letter-spacing: .15px; }
.evaluation-value { color: #6f5fd0; margin-top: -2px; letter-spacing: -.8px; }
.home-indicator { width: 417px; height: 15px; border-radius: 8px; background: #000; margin: auto auto 24px; }
```
